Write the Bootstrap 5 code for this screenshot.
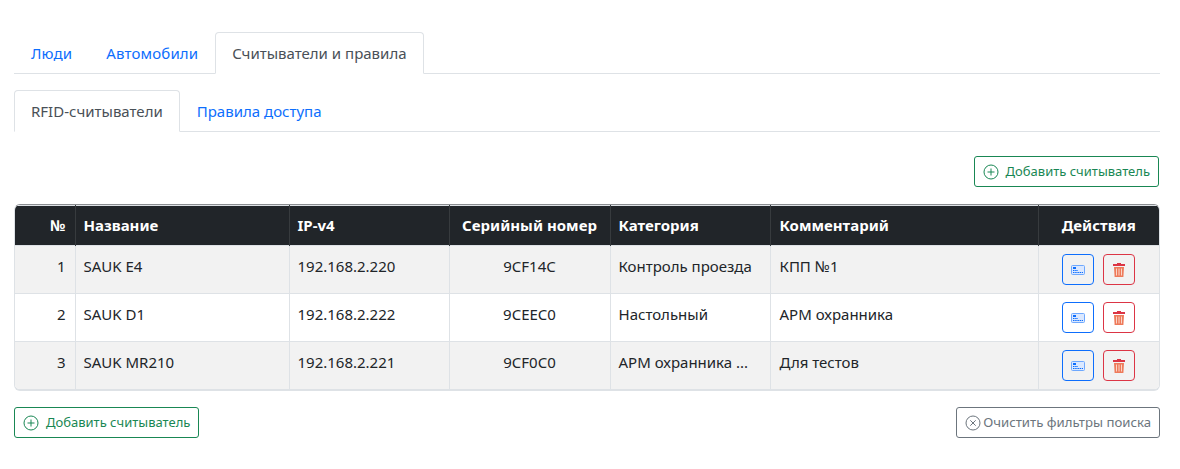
<!DOCTYPE html>
<html lang="ru">
<head>
    <meta charset="UTF-8">
    <meta name="viewport" content="width=device-width, initial-scale=1.0">
    <title>Считыватели и правила</title>
    <link href="https://cdn.jsdelivr.net/npm/bootstrap@5.3.3/dist/css/bootstrap.min.css" rel="stylesheet">
    <style>
        body {
            font-family: "Noto Sans", "Open Sans", sans-serif;
            font-size: 15px;
            color: #212529;
            background: #fff;
        }

        .page-wrap {
            padding: 32px 20px 0 14px;
        }

        .nav-tabs .nav-link {
            padding: 0 16px;
            height: 42px;
            line-height: 40px;
            font-size: 15px;
            border-top-left-radius: 4px;
            border-top-right-radius: 4px;
        }

        .nav-tabs .nav-link.active {
            color: #495057;
        }

        .main-tabs .nav-link {
            letter-spacing: .15px;
        }

        .main-tabs .nav-link.active {
            letter-spacing: 0;
        }

        .sub-tabs {
            margin-top: 16px;
        }

        .add-row {
            margin-top: 24px;
            margin-bottom: 17px;
            padding-right: 1px;
        }

        .act-btn {
            height: 31px;
            padding: 0 8px;
            font-size: 13px;
            line-height: 29px;
            display: inline-flex;
            align-items: center;
            white-space: nowrap;
            border-radius: 3px;
        }

        .act-btn svg {
            flex: none;
        }

        .add-btn svg {
            margin-right: 7px;
        }

        .clear-btn {
            font-size: 13.2px;
        }

        .clear-btn svg {
            margin-right: 2px;
        }

        .readers-box {
            border: 1px solid #dee2e6;
            border-top-color: #8a8d90;
            border-bottom-width: 2px;
            border-radius: 6px;
            overflow: hidden;
            height: 187px;
        }

        .readers-table {
            table-layout: fixed;
            width: 100%;
            margin: 0;
            font-size: 15px;
        }

        .readers-table th,
        .readers-table td {
            padding: 0 8px;
            vertical-align: middle;
            white-space: nowrap;
            overflow: hidden;
        }

        .readers-table .cell-num {
            padding-right: 9px;
        }

        .readers-table th:nth-child(6),
        .readers-table td:nth-child(6) {
            padding-left: 9px;
        }

        .readers-table thead th {
            height: 40px;
            font-weight: 700;
            background: #212529;
            color: #fff;
            border-color: #373b3e;
        }

        .readers-table tbody td {
            height: 48px;
            padding-top: 8px;
            line-height: 24px;
            vertical-align: top;
            background: #fff;
            color: #212529;
        }

        .readers-table tbody tr.row-odd td {
            background: #f2f2f2;
        }

        .readers-table th:first-child,
        .readers-table td:first-child {
            border-left: 0;
        }

        .readers-table th:last-child,
        .readers-table td:last-child {
            border-right: 0;
        }

        .readers-table tbody tr:last-child td {
            border-bottom: 0;
        }

        .w-num { width: 60px; }
        .w-name { width: 214px; }
        .w-ip { width: 160px; }
        .w-serial { width: 161px; }
        .w-cat { width: 160px; }
        .w-note { width: 268px; }
        .w-act { width: 121px; }

        .icon-group {
            gap: 9px;
        }

        .icon-btn {
            width: 32px;
            height: 31px;
            padding: 0;
            display: inline-flex;
            align-items: center;
            justify-content: center;
            border-radius: 4px;
        }

        .bottom-row {
            margin-top: 16px;
        }
    </style>
</head>
<body>
    <div class="page-wrap">
        <ul class="nav nav-tabs main-tabs">
            <li class="nav-item"><a class="nav-link" href="#">Люди</a></li>
            <li class="nav-item"><a class="nav-link" href="#">Автомобили</a></li>
            <li class="nav-item"><a class="nav-link active" href="#">Считыватели и правила</a></li>
        </ul>
        <ul class="nav nav-tabs sub-tabs">
            <li class="nav-item"><a class="nav-link active" href="#">RFID-считыватели</a></li>
            <li class="nav-item"><a class="nav-link" href="#">Правила доступа</a></li>
        </ul>

        <div class="d-flex justify-content-end add-row">
            <button type="button" class="btn btn-outline-success act-btn add-btn">
                <svg width="16" height="16" viewBox="0 0 16 16" fill="none" stroke="currentColor" stroke-width="1"><circle cx="8" cy="8" r="7"/><path d="M8 4.5v7M4.5 8h7"/></svg>
                Добавить считыватель
            </button>
        </div>

        <div class="readers-box">
            <table class="table table-bordered readers-table">
                <colgroup>
                    <col class="w-num"><col class="w-name"><col class="w-ip"><col class="w-serial"><col class="w-cat"><col class="w-note"><col class="w-act">
                </colgroup>
                <thead>
                    <tr>
                        <th class="text-end cell-num">№</th>
                        <th>Название</th>
                        <th>IP-v4</th>
                        <th class="text-center">Серийный номер</th>
                        <th>Категория</th>
                        <th>Комментарий</th>
                        <th class="text-center">Действия</th>
                    </tr>
                </thead>
                <tbody id="rows"></tbody>
            </table>
        </div>

        <div class="d-flex justify-content-between bottom-row">
            <button type="button" class="btn btn-outline-success act-btn add-btn">
                <svg width="16" height="16" viewBox="0 0 16 16" fill="none" stroke="currentColor" stroke-width="1"><circle cx="8" cy="8" r="7"/><path d="M8 4.5v7M4.5 8h7"/></svg>
                Добавить считыватель
            </button>
            <button type="button" class="btn btn-outline-secondary act-btn clear-btn">
                <svg width="16" height="16" viewBox="0 0 16 16" fill="none" stroke="currentColor" stroke-width="1"><circle cx="8" cy="8" r="7"/><path d="M5.3 5.3l5.4 5.4M10.7 5.3l-5.4 5.4"/></svg>
                Очистить фильтры поиска
            </button>
        </div>
    </div>

    <script>
        const readers = [
            [1, "SAUK E4", "192.168.2.220", "9CF14C", "Контроль проезда", "КПП №1"],
            [2, "SAUK D1", "192.168.2.222", "9CEEC0", "Настольный", "АРМ охранника"],
            [3, "SAUK MR210", "192.168.2.221", "9CF0C0", "АРМ охранника ...", "Для тестов"]
        ];

        const cardIcon = '<svg width="14" height="10" viewBox="0 0 14 10"><rect x=".5" y=".5" width="13" height="9" rx="1" fill="#dbe8ff" stroke="#6ea8fe"/><rect x="2" y="2" width="3" height="2" fill="#0d6efd"/><path d="M2 5.500h5M2 7.500h10" stroke="#0d6efd" stroke-dasharray="1.5 .7"/></svg>';
        const trashIcon = '<svg width="12" height="14" viewBox="0 0 12 14"><path d="M4 0h4v1h4v2H0V1h4z" fill="#dc3545"/><path d="M1 4h10l-.6 10H1.600z" fill="#ee7a5a"/><path d="M3.500 5.500v7M6 5.500v7M8.500 5.500v7" stroke="#fbd5c8"/></svg>';

        document.getElementById("rows").innerHTML = readers.map((r, i) => `
            <tr class="${i % 2 === 0 ? "row-odd" : ""}">
                <td class="text-end cell-num">${r[0]}</td>
                <td>${r[1]}</td>
                <td>${r[2]}</td>
                <td class="text-center">${r[3]}</td>
                <td>${r[4]}</td>
                <td>${r[5]}</td>
                <td>
                    <div class="d-flex justify-content-center icon-group">
                        <button type="button" class="btn btn-outline-primary icon-btn">${cardIcon}</button>
                        <button type="button" class="btn btn-outline-danger icon-btn">${trashIcon}</button>
                    </div>
                </td>
            </tr>`).join("");
    </script>
    <script src="https://cdn.jsdelivr.net/npm/bootstrap@5.3.3/dist/js/bootstrap.bundle.min.js"></script>
</body>
</html>
